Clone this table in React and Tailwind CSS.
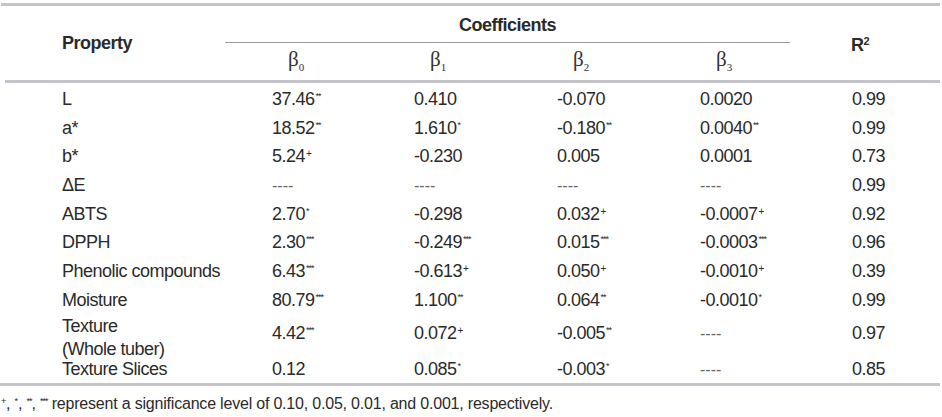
import React from "react"

const rows = [
  { p: ["L"], v: [["37.46", "**"], ["0.410"], ["-0.070"], ["0.0020"]], r: "0.99" },
  { p: ["a*"], v: [["18.52", "**"], ["1.610", "*"], ["-0.180", "**"], ["0.0040", "**"]], r: "0.99" },
  { p: ["b*"], v: [["5.24", "+"], ["-0.230"], ["0.005"], ["0.0001"]], r: "0.73" },
  { p: ["ΔE"], v: [["----"], ["----"], ["----"], ["----"]], r: "0.99" },
  { p: ["ABTS"], v: [["2.70", "*"], ["-0.298"], ["0.032", "+"], ["-0.0007", "+"]], r: "0.92" },
  { p: ["DPPH"], v: [["2.30", "***"], ["-0.249", "***"], ["0.015", "***"], ["-0.0003", "***"]], r: "0.96" },
  { p: ["Phenolic compounds"], v: [["6.43", "***"], ["-0.613", "+"], ["0.050", "+"], ["-0.0010", "+"]], r: "0.39" },
  { p: ["Moisture"], v: [["80.79", "***"], ["1.100", "**"], ["0.064", "**"], ["-0.0010", "*"]], r: "0.99" },
  { p: ["Texture", "(Whole tuber)"], v: [["4.42", "***"], ["0.072", "+"], ["-0.005", "**"], ["----"]], r: "0.97" },
  { p: ["Texture Slices"], v: [["0.12"], ["0.085", "*"], ["-0.003", "*"], ["----"]], r: "0.85" },
]

function Mark({ s }) {
  if (!s) return null
  if (s === "+") return <span className="relative -top-[5px] text-[10px] ml-[1px]">+</span>
  return <span className="relative -top-[6px] text-[9px] tracking-[-1px] ml-[1px]">{s}</span>
}

function Value({ v }) {
  if (v[0] === "----") return <span className="text-[#666] text-[16px] tracking-normal">----</span>
  return (
    <span>
      {v[0]}
      <Mark s={v[1]} />
    </span>
  )
}

function Beta({ n }) {
  return (
    <span className="font-['Liberation_Serif',serif] text-[21px] text-[#333] tracking-normal">
      β<span className="relative top-[5px] text-[11px]">{n}</span>
    </span>
  )
}

export default function App() {
  return (
    <div className="w-[942px] h-[417px] bg-white text-[#2a2a2a] font-['Liberation_Sans',Arial,sans-serif] text-[18px] tracking-[-0.5px] overflow-hidden">
      <div className="pt-[3px] pl-[1px] pr-[2px]">
        <div className="h-[3px] bg-[#c3c3c9]" />
      </div>

      {/* header */}
      <div className="flex h-[74px]">
        <div className="w-[225px] pl-[62px] pt-[1px] flex items-center font-bold">Property</div>
        <div className="w-[565px] flex flex-col">
          <div className="h-[37px] pt-[2px] flex items-center justify-center font-bold border-b border-[#9a9a9a]">
            Coefficients
          </div>
          <div className="flex-1 grid grid-cols-[142px_143px_143px_1fr] pl-[63px] items-center pb-[3px]">
            <Beta n="0" />
            <Beta n="1" />
            <Beta n="2" />
            <Beta n="3" />
          </div>
        </div>
        <div className="flex-1 pl-[61px] pt-[4px] flex items-center font-bold">
          <span>
            R<span className="relative -top-[6px] text-[11px]">2</span>
          </span>
        </div>
      </div>
      <div className="pl-[5px] pr-[2px]">
        <div className="h-[3px] bg-[#c3c3c9]" />
      </div>

      {/* body */}
      <div className="pt-[2px]">
        {rows.map((row, i) => {
          const tall = row.p.length > 1
          const last = i === rows.length - 1
          return (
            <div
              key={i}
              className={
                "grid grid-cols-[272px_142px_143px_143px_152px_1fr] items-center " +
                (tall ? "h-[41px]" : last ? "h-[27px]" : "h-[28.7px]")
              }
            >
              <div className="pl-[62px] leading-[23px]">
                {row.p.map((t) => (
                  <div key={t}>{t}</div>
                ))}
              </div>
              {row.v.map((v, j) => (
                <div key={j} className={tall ? "pb-[9px]" : ""}>
                  <Value v={v} />
                </div>
              ))}
              <div className={tall ? "pb-[9px]" : ""}>{row.r}</div>
            </div>
          )
        })}
      </div>
      <div className="pr-[2px]">
        <div className="h-[3px] bg-[#c3c3c9]" />
      </div>

      {/* footnote */}
      <div className="pl-[1px] pt-[9px] text-[16px] tracking-[-0.2px] leading-[18px]">
        <span className="relative -top-[5px] text-[9px]">+</span>,{" "}
        <span className="relative -top-[5px] text-[9px]">*</span>,{" "}
        <span className="relative -top-[5px] text-[9px] tracking-[-1px]">**</span>,{" "}
        <span className="relative -top-[5px] text-[9px] tracking-[-1px]">***</span> represent a significance level of
        0.10, 0.05, 0.01, and 0.001, respectively.
      </div>
    </div>
  )
}
